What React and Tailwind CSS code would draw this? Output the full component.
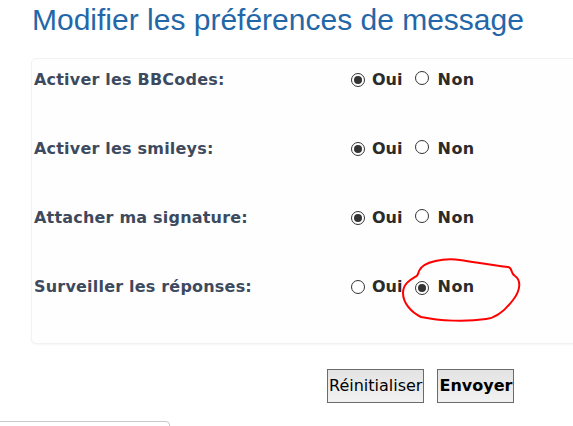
import React from "react";

function Radio({ checked }) {
  return (
    <span className="inline-flex items-center justify-center w-[14px] h-[14px] rounded-full border border-[#333] bg-white">
      {checked && <span className="w-[8px] h-[8px] rounded-full bg-[#333]" />}
    </span>
  );
}

function Row({ label, oui }) {
  return (
    <div className="flex items-start h-[69px] pt-[12px]">
      <div className="w-[319px] pl-[2px] text-[16px] font-bold tracking-[0.2px] text-[#3d4a5e] leading-[18px]">{label}</div>
      <div className="flex items-center leading-[18px] text-[16px] font-bold text-[#2b2b2b]">
        <Radio checked={oui} />
        <span className="ml-[7px]">Oui</span>
        <span className="ml-[13px]"><Radio checked={!oui} /></span>
        <span className="ml-[8px] tracking-[0.5px]">Non</span>
      </div>
    </div>
  );
}

export default function App() {
  return (
    <div className="relative w-[573px] h-[426px] overflow-hidden bg-white" style={{ fontFamily: '"DejaVu Sans", Verdana, sans-serif' }}>
      <h2 className="pl-[32px] pt-[1px] h-[58px] text-[30px] leading-[38px] text-[#2467a8] font-normal" style={{ fontFamily: '"Liberation Sans", Arial, sans-serif' }}>
        Modifier les préférences de message
      </h2>
      <div className="ml-[31px] w-[560px] rounded-[5px] border border-[#f2f2f2] bg-[#fefefe] shadow-[0_1px_2px_rgba(0,0,0,0.04)] pb-[8px]">
        <Row label="Activer les BBCodes:" oui />
        <Row label="Activer les smileys:" oui />
        <Row label="Attacher ma signature:" oui />
        <Row label="Surveiller les réponses:" oui={false} />
      </div>
      <div className="flex pl-[327px] pt-[25px] gap-[13px]">
        <button className="h-[34px] px-[1px] border border-[#6b6b6b] bg-gradient-to-b from-[#e3e3e3] to-[#f2f2f2] text-[16px] text-black">Réinitialiser</button>
        <button className="h-[34px] px-[1px] border border-[#6b6b6b] bg-gradient-to-b from-[#e3e3e3] to-[#f2f2f2] text-[16px] font-bold text-black">Envoyer</button>
      </div>
      <div className="absolute left-[-10px] top-[421px] w-[180px] h-[40px] rounded-[4px] border border-[#c8c8c8]" />
      <svg className="absolute left-0 top-0 pointer-events-none" width="573" height="426">
        <path d="M 419 271 C 423 261, 445 258, 460 260 C 480 263, 496 266, 508 267 C 513 268, 510 273, 515 276 C 521 280, 521 290, 513 300 C 504 312, 496 318, 486 319 C 466 322, 440 321, 421 317 C 411 312, 403 303, 403 293 C 403 284, 410 280, 415 277 C 418 276, 418 274, 419 271" fill="none" stroke="#ff0000" strokeWidth="2" strokeLinejoin="round" />
      </svg>
    </div>
  );
}
